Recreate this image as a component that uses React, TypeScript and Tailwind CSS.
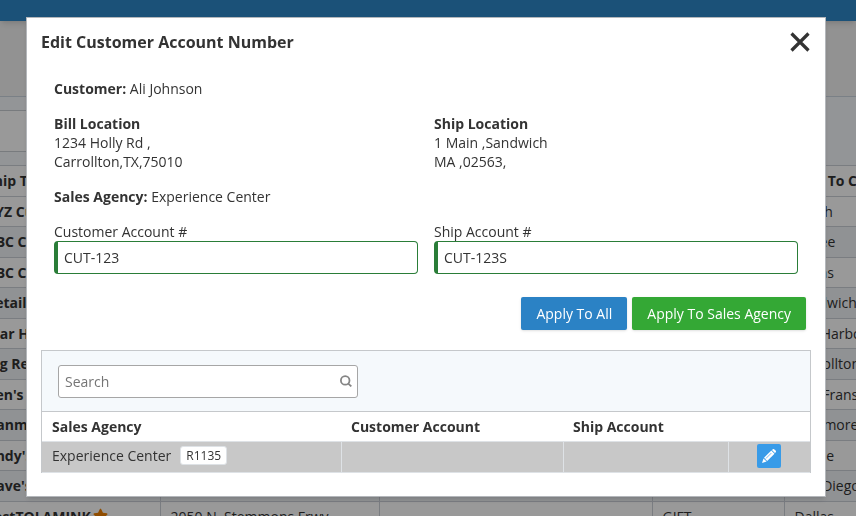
import { FaStar } from 'react-icons/fa';

const shipTos = [
  { name: 'XYZ Custom', address: '120 Elm St', type: '', city: 'South' },
  { name: 'ABC Company', address: '48 Oak Ave', type: '', city: 'Renee' },
  { name: 'ABC Company', address: '910 Main St', type: '', city: 'Dallas' },
  { name: 'Retail Store', address: '1 Main', type: '', city: 'Sandwich' },
  { name: 'Star Harbor', address: '77 Harbor Rd', type: '', city: 'Bar Harbor' },
  { name: 'Big Retail', address: '1234 Holly Rd', type: '', city: 'Carrollton' },
  { name: "Ben's Shop", address: '500 Market St', type: '', city: 'San Fransisco' },
  { name: 'Danmark', address: '31 Pratt St', type: '', city: 'Baltimore' },
  { name: "Andy's Shop", address: '8 Lake Dr', type: '', city: 'Castle' },
  { name: "Dave's Shop", address: '640 Beach Blvd', type: '', city: 'San Diego' },
  { name: 'TestTOLAMINK', address: '2050 N. Stemmons Frwy', type: 'GIFT', city: 'Dallas', starred: true },
];

const agencies = [{ name: 'Experience Center', code: 'R1135', customerAccount: '', shipAccount: '' }];

function PencilIcon() {
  return (
    <svg viewBox="0 0 14 14" className="size-[14px]" fill="currentColor">
      <path d="M9.9 1 10.6.4a1.3 1.3 0 0 1 1.8 0l1.2 1.2a1.3 1.3 0 0 1 0 1.8l-.7.7z" />
      <path d="M9.3 1.5 12.5 4.7 5.2 12 2 8.8z" />
      <path d="M1.5 9.4 4.6 12.5 0 14z" />
      <path d="M3.9 9.5 9.3 4.1" stroke="#389be8" strokeWidth="0.7" />
    </svg>
  );
}

function BackgroundPage() {
  return (
    <div className="h-screen overflow-hidden bg-[#f4f4f4]" aria-hidden="true">
      <header className="h-[21px] bg-[#2d87c8] shadow-md" />
      <main className="mt-[75px] border-t border-[#ccd5e0] bg-[#f6f9fc]">
        <div className="pt-[13px] pb-[13px] pr-24">
          <div className="h-[42px] border-y border-[#c8cdd2] bg-white" />
        </div>
        <div className="-ml-6">
          <table className="w-full table-fixed border-collapse text-left text-sm whitespace-nowrap">
            <colgroup>
              <col className="w-[184px]" />
              <col className="w-[219px]" />
              <col />
              <col className="w-[132px]" />
              <col className="w-[72px]" />
            </colgroup>
            <thead>
              <tr className="h-[31px] border-y border-[#ccd0d8] bg-white">
                <th className="px-[10px]">Ship To</th>
                <th className="px-[10px]">Address</th>
                <th />
                <th className="px-[10px]">Type</th>
                <th className="px-[10px]">Ship To City</th>
              </tr>
            </thead>
            <tbody>
              {shipTos.map((row, i) => (
                <tr
                  key={i}
                  className="h-[30px] border-b border-[#ccd0d8] odd:bg-white even:h-[31px] even:bg-[#f1f4f7]"
                >
                  <td className="border-r border-[#ccd0d8] px-[10px] font-bold">
                    {row.name}
                    {row.starred && <FaStar className="ml-[2px] inline size-[15px] align-[-1px] text-[#f08000]" />}
                  </td>
                  <td className="border-r border-[#ccd0d8] px-[10px]">{row.address}</td>
                  <td className="border-r border-[#ccd0d8]" />
                  <td className="border-r border-[#ccd0d8] px-[10px]">{row.type}</td>
                  <td className="px-[10px]">{row.city}</td>
                </tr>
              ))}
            </tbody>
          </table>
        </div>
      </main>
    </div>
  );
}

function AccountField({ id, label, value }: { id: string; label: string; value: string }) {
  return (
    <div>
      <label htmlFor={id} className="block">
        {label}
      </label>
      <input
        id={id}
        type="text"
        defaultValue={value}
        className="block h-[33px] w-full rounded border border-l-4 border-[#2a7d38] bg-white px-[6px] outline-none"
      />
    </div>
  );
}

function AgencyTable() {
  return (
    <section className="mt-5 border border-b-0 border-[#c5c8cb]">
      <div className="border-b border-[#c5c8cb] bg-[#f5f9fc] px-4 pt-[14px] pb-[13px]">
        <div className="relative w-[300px]">
          <input
            type="search"
            aria-label="Search"
            placeholder="Search"
            className="block h-[33px] w-full rounded-[3px] border border-[#a6a6a6] bg-white px-[6px] outline-none placeholder:text-[#757575]"
          />
          <svg
            viewBox="0 0 12 12"
            className="absolute top-[10px] right-[6px] size-3 text-[#858585]"
            fill="none"
            stroke="currentColor"
            strokeWidth="1.8"
          >
            <circle cx="5.2" cy="5.4" r="4.3" />
            <path d="M8.3 8.6 11.3 11.4" />
          </svg>
        </div>
      </div>
      <table className="w-full table-fixed border-collapse text-left">
        <colgroup>
          <col className="w-[299px]" />
          <col className="w-[222px]" />
          <col className="w-[165px]" />
          <col />
        </colgroup>
        <thead>
          <tr className="h-[29px]">
            <th className="px-[10px]">Sales Agency</th>
            <th className="px-[10px]">Customer Account</th>
            <th className="px-[10px]">Ship Account</th>
            <th />
          </tr>
        </thead>
        <tbody>
          {agencies.map((agency) => (
            <tr key={agency.code} className="h-[31px] border-y border-[#dee2e6] bg-[#c8c8c8]">
              <td className="border-r border-[#dee2e6] px-[10px] pb-[2px]">
                <div className="flex items-center gap-[9px]">
                  {agency.name}
                  <span className="rounded-[3px] border border-[#dee2e6] bg-white px-[5px] text-xs leading-[17px]">
                    {agency.code}
                  </span>
                </div>
              </td>
              <td className="border-r border-[#dee2e6] px-[10px]">{agency.customerAccount}</td>
              <td className="border-r border-[#dee2e6] px-[10px]">{agency.shipAccount}</td>
              <td className="pb-[2px]">
                <button
                  type="button"
                  aria-label="Edit"
                  className="mx-auto flex size-6 items-center justify-center rounded-[2px] bg-[#389be8] text-white"
                >
                  <PencilIcon />
                </button>
              </td>
            </tr>
          ))}
        </tbody>
      </table>
    </section>
  );
}

function EditAccountDialog() {
  return (
    <div
      role="dialog"
      aria-labelledby="dialog-title"
      className="border border-[#b4b7bb] bg-white px-[14px] pb-[23px] shadow-md"
    >
      <div className="flex h-12 items-center justify-between">
        <h1 id="dialog-title" className="text-base font-bold">
          Edit Customer Account Number
        </h1>
        <button type="button" aria-label="Close">
          <svg viewBox="0 0 22 22" className="size-[22px]" stroke="currentColor" strokeWidth="3.2">
            <path d="M2.5 2.5l17 17M19.5 2.5l-17 17" />
          </svg>
        </button>
      </div>

      <div className="mt-[13px] flex flex-col gap-4 px-[13px]">
        <p>
          <b>Customer:</b> Ali Johnson
        </p>
        <div className="grid grid-cols-2 gap-4">
          <div>
            <h2 className="font-bold">Bill Location</h2>
            <p>1234 Holly Rd ,</p>
            <p>Carrollton,TX,75010</p>
          </div>
          <div>
            <h2 className="font-bold">Ship Location</h2>
            <p>1 Main ,Sandwich</p>
            <p>MA ,02563,</p>
          </div>
        </div>
        <p>
          <b>Sales Agency:</b> Experience Center
        </p>
        <div className="grid grid-cols-2 gap-4">
          <AccountField id="customer-account" label="Customer Account #" value="CUT-123" />
          <AccountField id="ship-account" label="Ship Account #" value="CUT-123S" />
        </div>
      </div>

      <div className="mt-[23px] flex justify-end gap-[5px] pr-[5px] font-medium text-white">
        <button type="button" className="h-[33px] rounded-[2px] bg-[#2b82c5] px-[15px] shadow">
          Apply To All
        </button>
        <button type="button" className="h-[33px] rounded-[2px] bg-[#34a835] px-[15px] shadow">
          Apply To Sales Agency
        </button>
      </div>

      <AgencyTable />
    </div>
  );
}

export default function App() {
  return (
    <div className="font-['Open_Sans',sans-serif] text-sm leading-[19px] text-[#333]">
      <BackgroundPage />
      <div className="fixed inset-0 overflow-hidden bg-black/40 pt-[17px] pr-[30px] pl-[26px]">
        <EditAccountDialog />
      </div>
    </div>
  );
}
